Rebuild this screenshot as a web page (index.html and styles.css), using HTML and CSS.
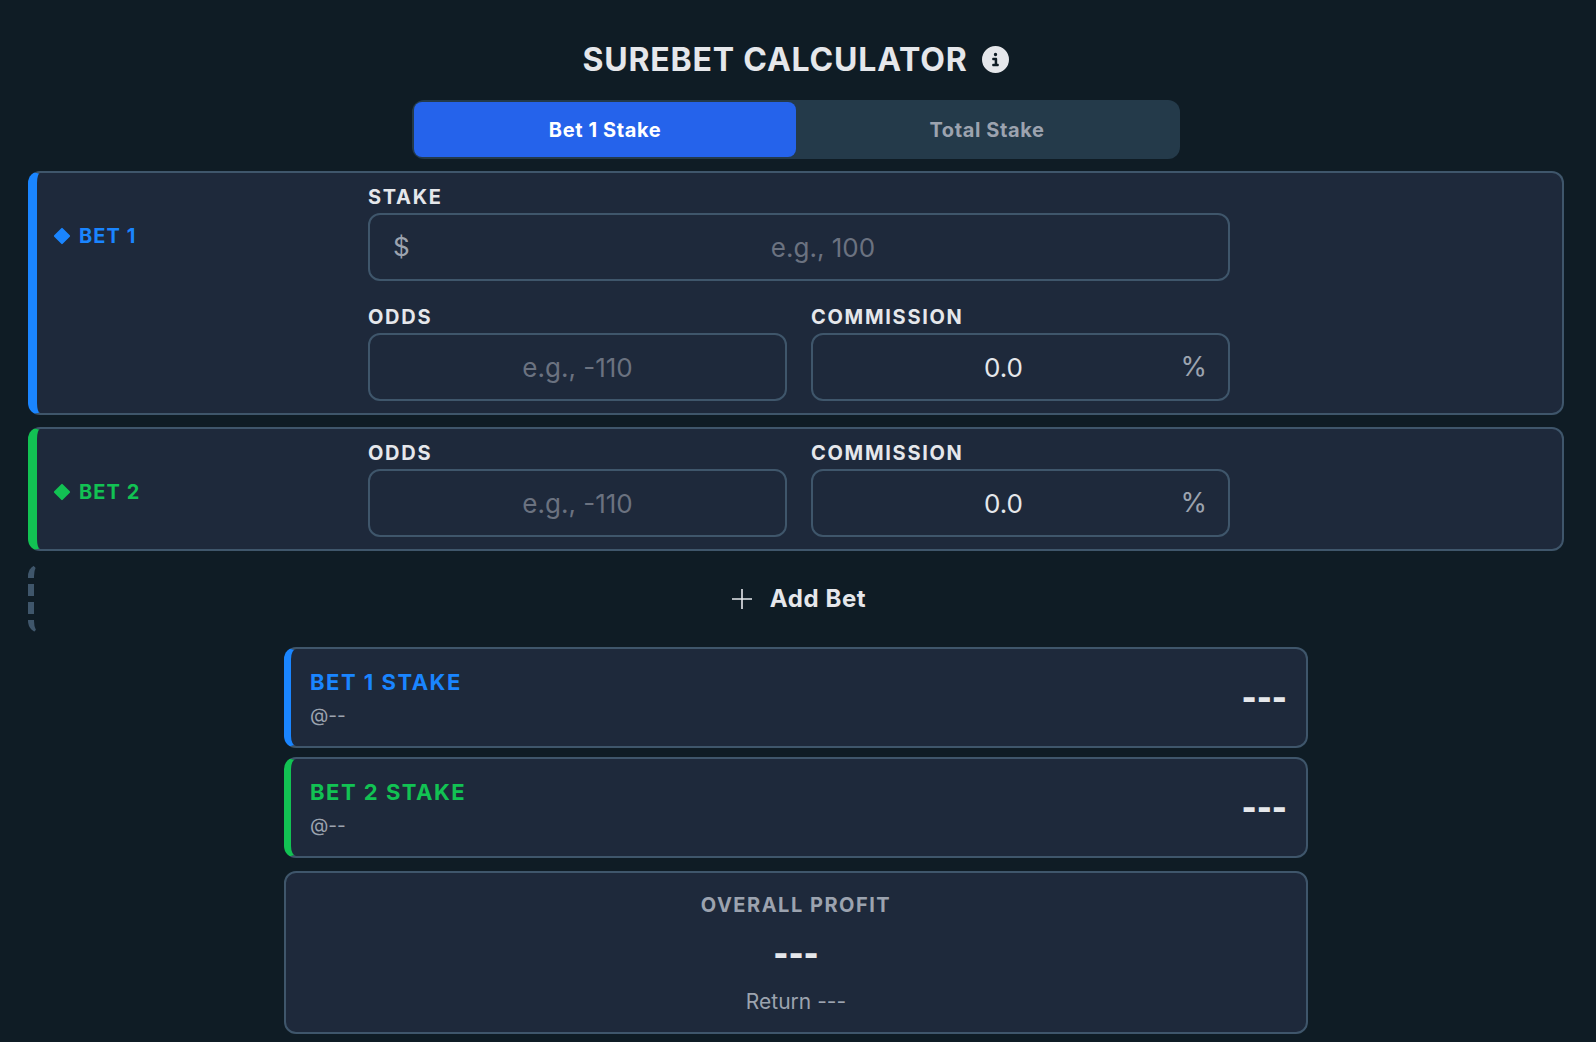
FILE: index.html
```html
<html>
  <head>
    <link rel="stylesheet" href="styles.css">
    <title>Surebet Calculator</title>
  </head>
  <body>
    <div class="titleRow">
      <h1 class="title">SUREBET CALCULATOR</h1>
      <svg class="infoIcon" viewBox="0 0 512 512"><path d="M256 512A256 256 0 1 0 256 0a256 256 0 1 0 0 512zM216 336h24V272H216c-13.3 0-24-10.7-24-24s10.7-24 24-24h48c13.3 0 24 10.7 24 24v88h8c13.3 0 24 10.7 24 24s-10.7 24-24 24H216c-13.3 0-24-10.7-24-24s10.7-24 24-24zm40-208a32 32 0 1 1 0 64 32 32 0 1 1 0-64z"/></svg>
    </div>

    <div class="tabs">
      <div class="tab chosen">Bet 1 Stake</div>
      <div class="tab">Total Stake</div>
    </div>

    <div class="betCard blue">
      <div class="betName"><span class="diamond"></span>BET 1</div>
      <div class="fields">
        <div class="field wide">
          <label>STAKE</label>
          <div class="inputWrap">
            <span class="prefix">$</span>
            <input class="stakeInput" placeholder="e.g., 100">
          </div>
        </div>
        <div class="field">
          <label>ODDS</label>
          <div class="inputWrap"><input placeholder="e.g., -110"></div>
        </div>
        <div class="field">
          <label>COMMISSION</label>
          <div class="inputWrap">
            <input class="commissionInput" value="0.0">
            <span class="suffix">%</span>
          </div>
        </div>
      </div>
    </div>

    <div class="betCard green">
      <div class="betName"><span class="diamond"></span>BET 2</div>
      <div class="fields">
        <div class="field">
          <label>ODDS</label>
          <div class="inputWrap"><input placeholder="e.g., -110"></div>
        </div>
        <div class="field">
          <label>COMMISSION</label>
          <div class="inputWrap">
            <input class="commissionInput" value="0.0">
            <span class="suffix">%</span>
          </div>
        </div>
      </div>
    </div>

    <div class="addBet">
      <svg class="plusIcon" viewBox="0 0 20 20"><path d="M10 0v20M0 10h20"/></svg>
      <span>Add Bet</span>
    </div>

    <div class="results">
      <div class="resultCard blue">
        <div>
          <div class="resultName">BET 1 STAKE</div>
          <div class="resultOdds">@--</div>
        </div>
        <div class="dashes">---</div>
      </div>
      <div class="resultCard green">
        <div>
          <div class="resultName">BET 2 STAKE</div>
          <div class="resultOdds">@--</div>
        </div>
        <div class="dashes">---</div>
      </div>
      <div class="profitCard">
        <div class="profitTitle">OVERALL PROFIT</div>
        <div class="dashes">---</div>
        <div class="profitReturn">Return ---</div>
      </div>
    </div>
  </body>
</html>
```

FILE: styles.css
```css
* {
  margin: 0;
  padding: 0;
  box-sizing: border-box;
}
body {
  background-color: #0f1c25;
  color: #e5e7eb;
  font-family: Inter, "Liberation Sans", sans-serif;
  padding: 0 32px 0 28px;
  height: 1042px;
  overflow: hidden;
}
.titleRow {
  height: 100px;
  padding-top: 18px;
  display: flex;
  justify-content: center;
  align-items: center;
  gap: 15px;
}
.title {
  font-size: 32px;
  font-weight: 700;
  letter-spacing: 0.8px;
}
.infoIcon {
  width: 27px;
  height: 27px;
  fill: #e5e7eb;
}
.tabs {
  width: 768px;
  height: 59px;
  margin: 0 auto 12px;
  padding: 2px;
  display: flex;
  background-color: #243a4a;
  border-radius: 12px;
}
.tab {
  flex: 1;
  display: flex;
  justify-content: center;
  align-items: center;
  font-size: 20px;
  font-weight: 700;
  letter-spacing: 0.6px;
  color: #9ca3af;
}
.tab.chosen {
  background-color: #2563eb;
  color: white;
  border-radius: 8px;
}
.betCard {
  display: grid;
  grid-template-columns: 314px 862px;
  padding: 10px 17px 12px 17px;
  margin-bottom: 12px;
  background-color: #1e293b;
  border: 2px solid #3f566b;
  border-left-width: 9px;
  border-radius: 12px;
}
.betName {
  margin-top: 41px;
  display: flex;
  align-items: center;
  gap: 9px;
  height: 24px;
  font-size: 20px;
  font-weight: 700;
  letter-spacing: 1.1px;
}
.diamond {
  width: 12px;
  height: 12px;
  margin-left: 2px;
  margin-right: 2px;
  transform: rotate(45deg);
  border-radius: 1px;
}
.fields {
  display: grid;
  grid-template-columns: 1fr 1fr;
  column-gap: 24px;
  row-gap: 22px;
}
.field.wide {
  grid-column: span 2;
}
.field label {
  display: block;
  height: 30px;
  line-height: 28px;
  font-size: 20px;
  font-weight: 700;
  letter-spacing: 1.7px;
}
.inputWrap {
  position: relative;
}
.inputWrap input {
  width: 100%;
  height: 68px;
  background-color: #1e293b;
  border: 2px solid #3f566b;
  border-radius: 12px;
  color: #e5e7eb;
  font-family: Inter, "Liberation Sans", sans-serif;
  font-size: 26px;
  text-align: center;
  outline: none;
}
.inputWrap input::placeholder {
  color: #6b7280;
}
.stakeInput {
  padding-left: 48px;
}
.commissionInput {
  padding-right: 34px;
}
.prefix,
.suffix {
  position: absolute;
  top: 18px;
  font-size: 26px;
  color: #9ca3af;
}
.prefix {
  left: 25px;
}
.suffix {
  right: 23px;
  font-size: 27px;
  top: 17px;
}
.addBet {
  height: 69px;
  margin: 13px 0 14px;
  display: flex;
  justify-content: center;
  align-items: center;
  gap: 18px;
  border-left: 6px dashed #3f566b;
  border-radius: 12px;
  font-size: 24px;
  font-weight: 700;
  letter-spacing: 0.6px;
}
.plusIcon {
  width: 20px;
  height: 20px;
  stroke: #e5e7eb;
  stroke-width: 1.6;
  fill: none;
}
.results {
  width: 1024px;
  margin: 0 auto;
}
.resultCard {
  height: 101px;
  margin-bottom: 9px;
  padding: 0 19px 0 19px;
  display: flex;
  justify-content: space-between;
  align-items: center;
  background-color: #1e293b;
  border: 2px solid #3f566b;
  border-left-width: 7px;
  border-radius: 12px;
}
.resultName {
  font-size: 22px;
  font-weight: 700;
  letter-spacing: 1.5px;
  line-height: 28px;
}
.resultOdds {
  margin-top: 8px;
  font-size: 19px;
  color: #9ca3af;
}
.dashes {
  font-size: 32px;
  font-weight: 900;
}
.profitCard {
  height: 163px;
  margin-top: 13px;
  padding-top: 20px;
  text-align: center;
  background-color: #1e293b;
  border: 2px solid #3f566b;
  border-radius: 12px;
}
.profitTitle {
  font-size: 20px;
  font-weight: 700;
  letter-spacing: 1.5px;
  color: #9ca3af;
}
.profitCard .dashes {
  margin-top: 17px;
}
.profitReturn {
  margin-top: 16px;
  font-size: 21px;
  color: #9ca3af;
}
.blue {
  border-left-color: #1a85ff;
}
.green {
  border-left-color: #12c253;
}
.blue .betName,
.blue .resultName {
  color: #1a85ff;
}
.green .betName,
.green .resultName {
  color: #12c253;
}
.blue .diamond {
  background-color: #1a85ff;
}
.green .diamond {
  background-color: #12c253;
}
```
